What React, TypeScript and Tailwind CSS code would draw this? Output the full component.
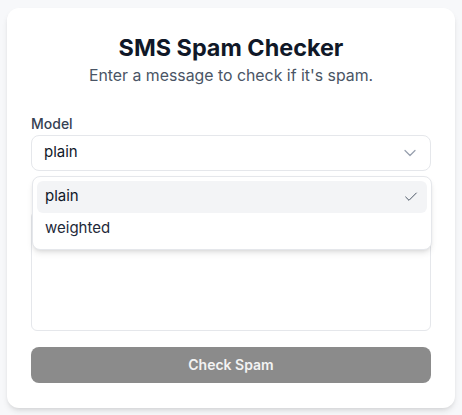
import React from "react";
import { Check, ChevronDown } from "lucide-react";

export default function App() {
  return (
    <div
      className="min-h-screen flex items-center justify-center bg-[#f7f8fa]"
      style={{ fontFamily: "Inter, 'Noto Sans', sans-serif" }}
    >
      <div className="w-[448px] h-[400px] bg-white rounded-xl shadow-md px-6 pt-6 pb-6 flex flex-col">
        <h1 className="text-[23.4px] leading-8 font-bold text-gray-900 text-center">SMS Spam Checker</h1>
        <p className="text-[15.85px] leading-6 text-gray-600 text-center">Enter a message to check if it's spam.</p>

        <div className="mt-[26px] flex flex-col">
          <label className="text-sm leading-5 font-medium text-gray-700">Model</label>
          <div className="relative mt-px">
            <div className="h-9 w-full rounded-lg border border-gray-200 bg-white pl-3 pr-2.5 flex items-center justify-between">
              <span className="text-[15px] text-gray-900">plain</span>
              <ChevronDown size={20} strokeWidth={1.5} className="text-gray-400" />
            </div>
            <div className="absolute left-px right-[-1px] top-[calc(100%+5px)] z-10 rounded-lg border border-gray-200 bg-white p-1 shadow-md">
              <div className="h-8 rounded-md bg-gray-100 pl-2 pr-2 flex items-center justify-between">
                <span className="text-[15px] text-gray-900">plain</span>
                <Check size={16} strokeWidth={1.5} className="text-gray-600" />
              </div>
              <div className="h-8 rounded-md pl-2 pr-2 flex items-center">
                <span className="text-[15px] text-gray-800">weighted</span>
              </div>
            </div>
          </div>
        </div>

        <div className="mt-4 flex flex-col pt-5">
          <textarea
            aria-label="Message"
            className="mt-1 h-[120px] w-full resize-none rounded-md border border-gray-200 bg-white px-3 py-2 text-[15px] outline-none"
          />
        </div>

        <button className="mt-4 h-9 w-full rounded-lg bg-[#8b8b8b] text-sm font-semibold text-[#f3f3f3]">
          Check Spam
        </button>
      </div>
    </div>
  );
}
